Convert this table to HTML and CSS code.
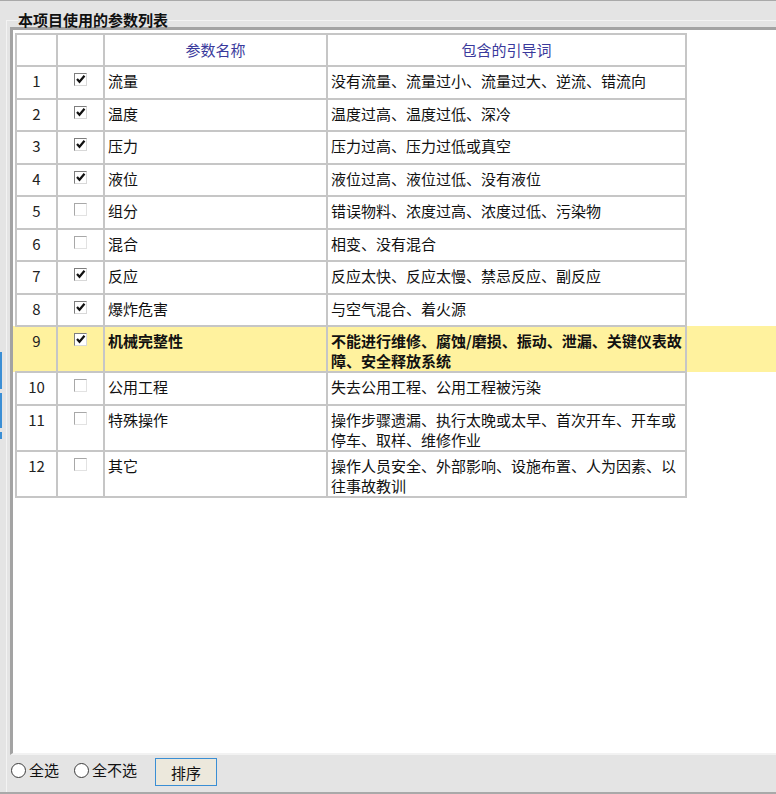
FILE: index.html
```html
<!DOCTYPE html>
<html lang="zh-CN">
<head>
<meta charset="utf-8">
<title>参数列表</title>
<link rel="stylesheet" href="styles.css">
</head>
<body>
<div class="window">
  <div class="edge">
    <span class="mark m1"></span>
    <span class="mark m2"></span>
    <span class="mark m3"></span>
  </div>
  <fieldset class="group">
    <legend class="group-title">本项目使用的参数列表</legend>
    <div class="listbox">
      <table class="grid">
        <colgroup>
          <col class="c-gutter"><col class="c-num"><col class="c-chk"><col class="c-name"><col class="c-words"><col class="c-fill">
        </colgroup>
        <thead>
          <tr><th class="gutter"></th><th></th><th></th><th>参数名称</th><th>包含的引导词</th><th class="fill"></th></tr>
        </thead>
        <tbody>
          <tr><td class="gutter"></td><td class="num">1</td><td><span class="cb on"><svg width="11" height="11" viewBox="0 0 11 11"><polyline points="2,5 4.5,7.8 9.5,1.8" fill="none" stroke="#111" stroke-width="2.2"/></svg></span></td><td>流量</td><td>没有流量、流量过小、流量过大、逆流、错流向</td><td class="fill"></td></tr>
          <tr><td class="gutter"></td><td class="num">2</td><td><span class="cb on"><svg width="11" height="11" viewBox="0 0 11 11"><polyline points="2,5 4.5,7.8 9.5,1.8" fill="none" stroke="#111" stroke-width="2.2"/></svg></span></td><td>温度</td><td>温度过高、温度过低、深冷</td><td class="fill"></td></tr>
          <tr><td class="gutter"></td><td class="num">3</td><td><span class="cb on"><svg width="11" height="11" viewBox="0 0 11 11"><polyline points="2,5 4.5,7.8 9.5,1.8" fill="none" stroke="#111" stroke-width="2.2"/></svg></span></td><td>压力</td><td>压力过高、压力过低或真空</td><td class="fill"></td></tr>
          <tr><td class="gutter"></td><td class="num">4</td><td><span class="cb on"><svg width="11" height="11" viewBox="0 0 11 11"><polyline points="2,5 4.5,7.8 9.5,1.8" fill="none" stroke="#111" stroke-width="2.2"/></svg></span></td><td>液位</td><td>液位过高、液位过低、没有液位</td><td class="fill"></td></tr>
          <tr><td class="gutter"></td><td class="num">5</td><td><span class="cb"></span></td><td>组分</td><td>错误物料、浓度过高、浓度过低、污染物</td><td class="fill"></td></tr>
          <tr><td class="gutter"></td><td class="num">6</td><td><span class="cb"></span></td><td>混合</td><td>相变、没有混合</td><td class="fill"></td></tr>
          <tr><td class="gutter"></td><td class="num">7</td><td><span class="cb on"><svg width="11" height="11" viewBox="0 0 11 11"><polyline points="2,5 4.5,7.8 9.5,1.8" fill="none" stroke="#111" stroke-width="2.2"/></svg></span></td><td>反应</td><td>反应太快、反应太慢、禁忌反应、副反应</td><td class="fill"></td></tr>
          <tr><td class="gutter"></td><td class="num">8</td><td><span class="cb on"><svg width="11" height="11" viewBox="0 0 11 11"><polyline points="2,5 4.5,7.8 9.5,1.8" fill="none" stroke="#111" stroke-width="2.2"/></svg></span></td><td>爆炸危害</td><td>与空气混合、着火源</td><td class="fill"></td></tr>
          <tr class="sel"><td class="gutter"></td><td class="num">9</td><td><span class="cb on"><svg width="11" height="11" viewBox="0 0 11 11"><polyline points="2,5 4.5,7.8 9.5,1.8" fill="none" stroke="#111" stroke-width="2.2"/></svg></span></td><td class="strong">机械完整性</td><td class="strong">不能进行维修、腐蚀/磨损、振动、泄漏、关键仪表故障、安全释放系统</td><td class="fill"></td></tr>
          <tr><td class="gutter"></td><td class="num">10</td><td><span class="cb"></span></td><td>公用工程</td><td>失去公用工程、公用工程被污染</td><td class="fill"></td></tr>
          <tr><td class="gutter"></td><td class="num">11</td><td><span class="cb"></span></td><td>特殊操作</td><td>操作步骤遗漏、执行太晚或太早、首次开车、开车或停车、取样、维修作业</td><td class="fill"></td></tr>
          <tr><td class="gutter"></td><td class="num">12</td><td><span class="cb"></span></td><td>其它</td><td>操作人员安全、外部影响、设施布置、人为因素、以往事故教训</td><td class="fill"></td></tr>
        </tbody>
      </table>
    </div>
    <div class="actions">
      <label class="radio"><span class="radio-dot"></span>全选</label>
      <label class="radio r2"><span class="radio-dot"></span>全不选</label>
      <button class="btn" type="button">排序</button>
    </div>
  </fieldset>
</div>
</body>
</html>
```

FILE: styles.css
```css
* { box-sizing: border-box; }
html, body { margin: 0; padding: 0; }
body {
  width: 776px;
  height: 794px;
  overflow: hidden;
  background: #e4e4e4;
  font-family: "Noto Sans CJK SC", "Noto Sans", sans-serif;
  font-size: 15px;
  color: #111;
}
.window {
  display: flex;
  height: 794px;
  border-top: 1px solid #a9a9a9;
  border-bottom: 2px solid #a9a9a9;
}
.edge {
  flex: 0 0 3px;
  display: flex;
  flex-direction: column;
}
.mark { display: block; width: 2px; background: #3b8fd5; }
.m1 { margin-top: 351px; height: 37px; }
.m2 { margin-top: 4px; height: 35px; }
.m3 { margin-top: 4px; height: 7px; }

.group {
  flex: 0 0 800px;
  min-width: 0;
  margin: 12px 0 0 3px;
  padding: 0 0 0 3px;
  border: 1px solid #f3f3f3;
  border-bottom: none;
}
.group-title {
  margin-left: 8px;
  padding: 0;
  font-weight: bold;
  font-size: 15px;
  line-height: 14px;
  color: #111;
}
.listbox {
  height: 728px;
  padding-top: 3px;
  background: #fff;
  border-top: 3px solid #a3a3a3;
  border-left: 3px solid #a3a3a3;
  border-bottom: 2px solid #f2f2f2;
}
.grid {
  width: 100%;
  table-layout: fixed;
  border-collapse: collapse;
}
.c-gutter { width: 3px; }
.c-num { width: 41px; }
.c-chk { width: 47px; }
.c-name { width: 223px; }
.c-words { width: 359px; }
.grid td, .grid th {
  border: 2px solid #c6c6c6;
  padding: 4px 3px 0;
  line-height: 20px;
  vertical-align: top;
  text-align: left;
  font-weight: normal;
}
.grid .gutter, .grid .fill { border: none; padding: 0; }
.grid thead tr { height: 32px; }
.grid th {
  vertical-align: middle;
  text-align: center;
  color: #3a3a9c;
  padding: 0 3px;
}
.grid tbody tr { height: 32.5px; }
.grid td.num { text-align: center; color: #222; }
.grid .sel td { background: #fff29e; }
.grid .sel td.num { border-left-color: #fff29e; }
.grid .strong { font-weight: bold; }

.cb {
  display: block;
  width: 13px;
  height: 13px;
  margin: 2px auto 0;
  background: #fff;
  border: 1px solid;
  border-color: #a8a8a8 #e2e2e2 #e2e2e2 #a8a8a8;
}
.cb.on { border-color: #7e7e7e #d8d8d8 #d8d8d8 #7e7e7e; }
.cb svg { display: block; }

.actions {
  display: flex;
  align-items: flex-start;
  height: 37px;
  padding: 3px 0 0 1px;
}
.radio {
  display: flex;
  align-items: center;
  margin-top: 1px;
  line-height: 22px;
  color: #111;
}
.radio-dot {
  width: 15px;
  height: 15px;
  border: 1px solid #3c3c3c;
  border-radius: 50%;
  background: #fff;
  margin-right: 3px;
}
.r2 { margin-left: 15px; }
.btn {
  margin-left: 18px;
  width: 62px;
  height: 28px;
  padding: 0;
  border: 1px solid #3a8ed4;
  background: #ece8dc;
  font-family: inherit;
  font-size: 15px;
  color: #111;
}
```
